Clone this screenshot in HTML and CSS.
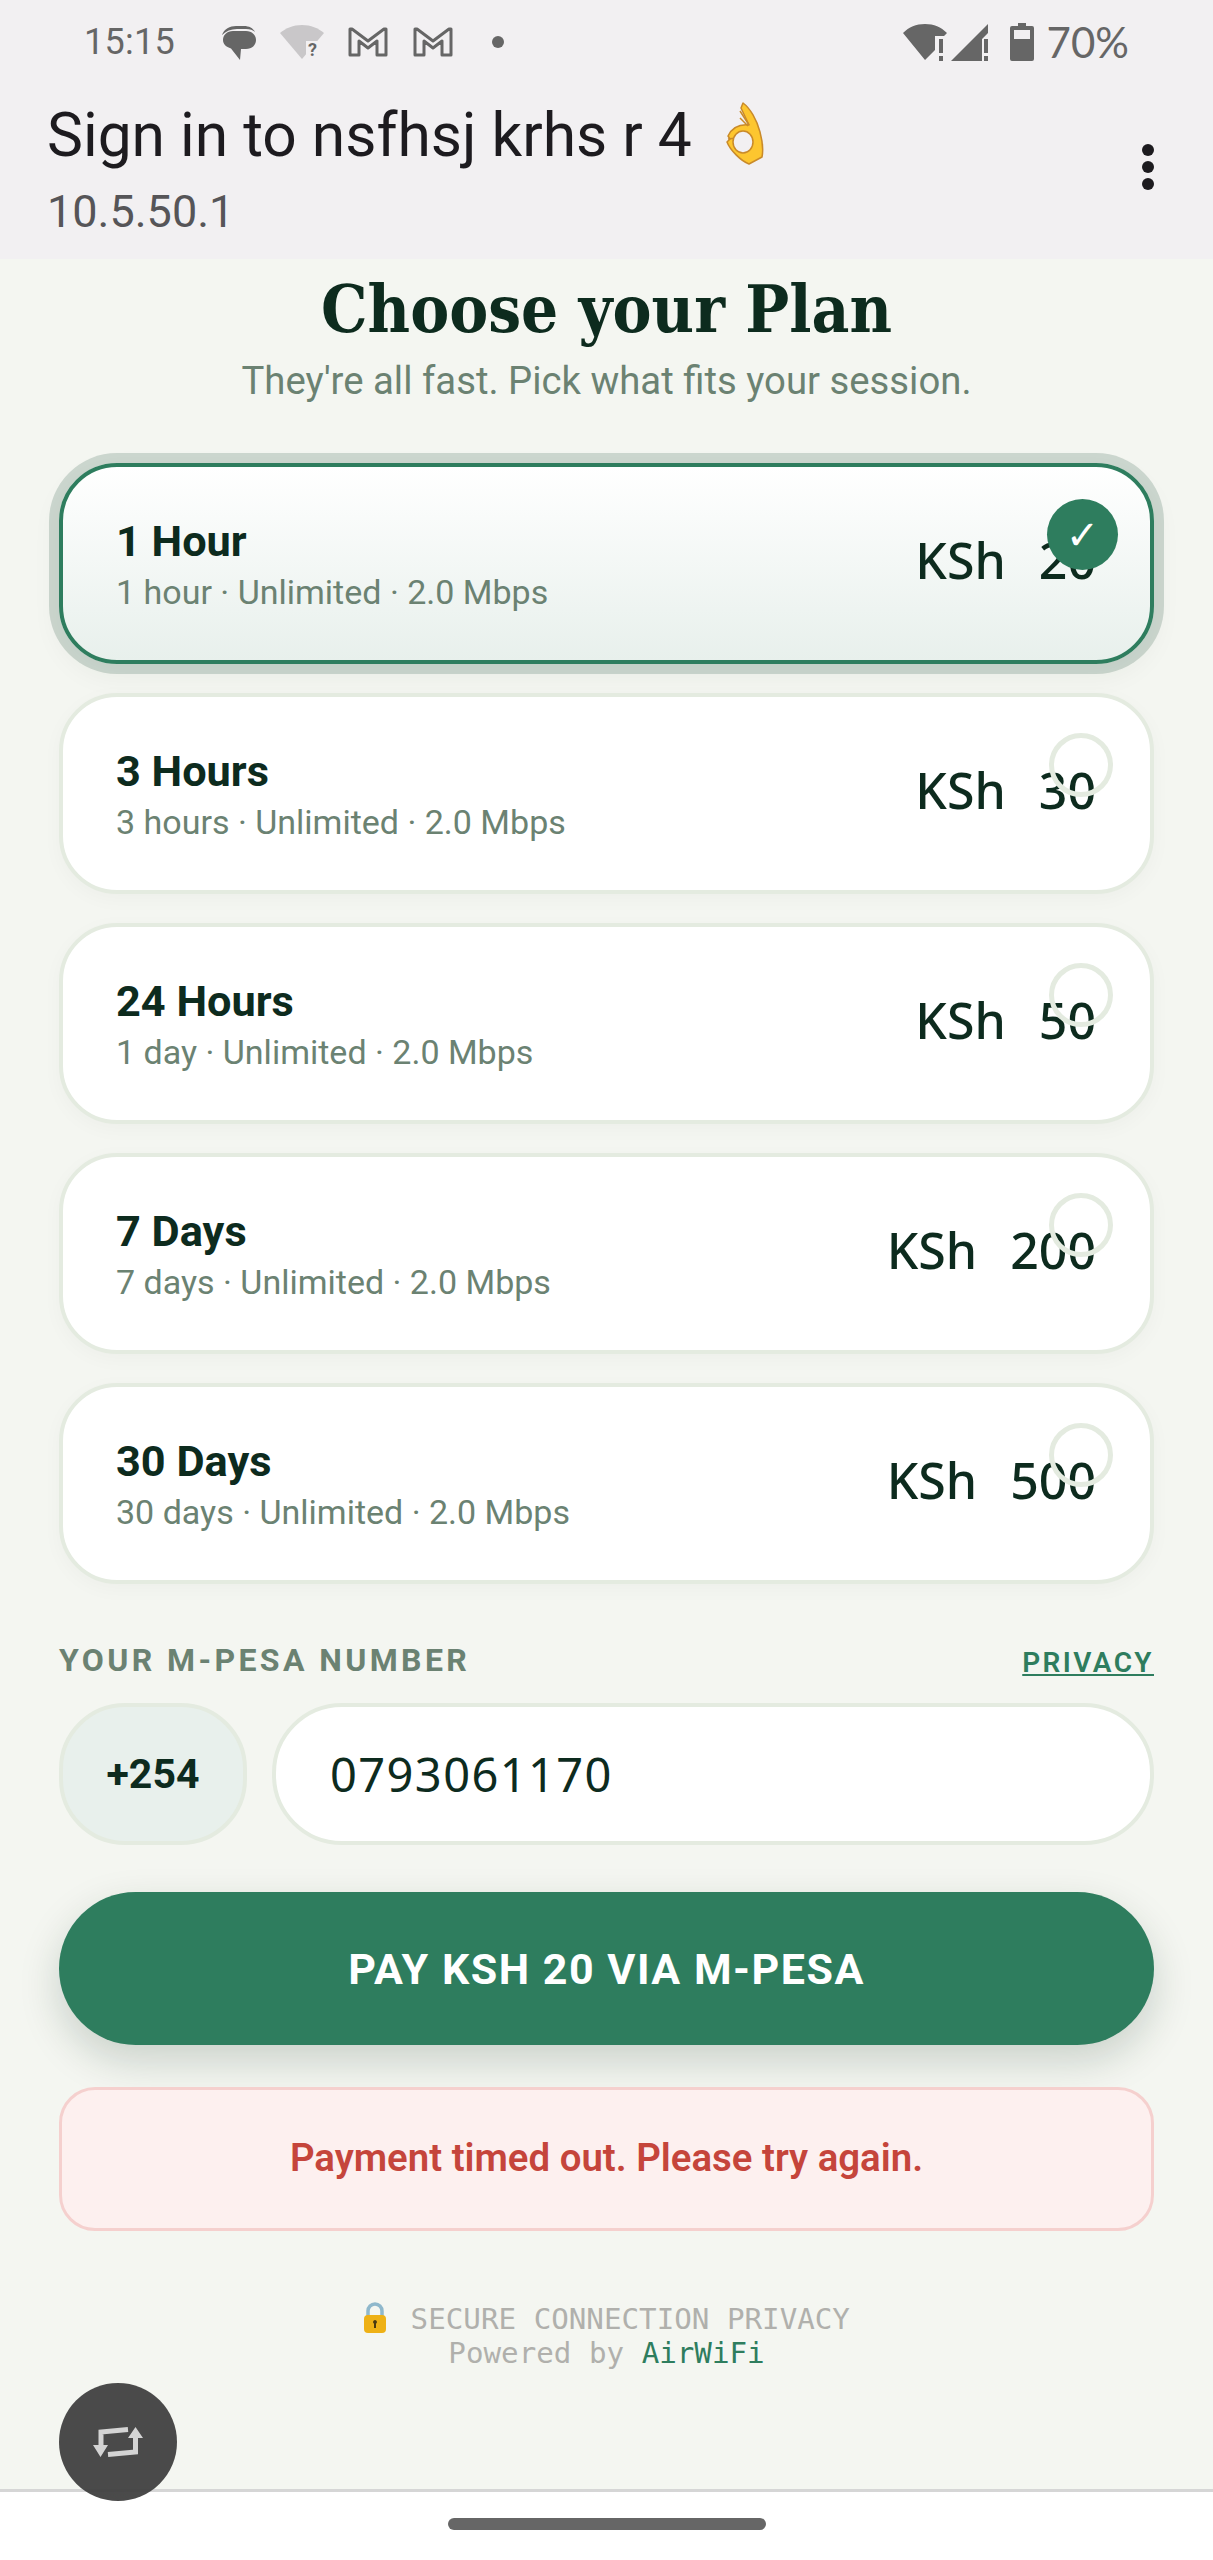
FILE: index.html
```html
<!DOCTYPE html>
<html lang="en">
<head>
<meta charset="UTF-8">
<meta name="viewport" content="width=device-width, initial-scale=1.0">
<title>Choose your Plan</title>
<link rel="stylesheet" href="styles.css">
</head>
<body>

<div class="phone">

<header class="top">
  <div class="statusbar">
    <span class="clock">15:15</span>
    <div class="notif-icons">
      <svg class="ic-msg" viewBox="0 0 36 36"><path d="M1 10C3 4 9 1 15 1h8c5 0 9 2 11 6-2-2-5-3-9-3h-9C10 4 5 6 1 10z" fill="#666"/><path d="M12 6h13c6 0 10 4 10 9s-4 9-10 9h-5l-1 11-9-11.500C5 22 2 19 2 15c0-5 4-9 10-9z" fill="#666"/></svg>
      <svg class="ic-wifi" viewBox="0 0 44 36"><path d="M0 9C6 4 13 1 22 1s16 3 22 8L22 35z" fill="#c9c7c9"/><path d="M26 17h18v19H26z" fill="#f2f0f2"/><text x="28" y="32" class="ic-q">?</text></svg>
      <svg class="ic-mail" viewBox="0 0 42 32"><path d="M3 3v26h9V15l9 7 9-7v14h9V3h-2L21 15 5 3z" fill="none" stroke="#666" stroke-width="3" stroke-linejoin="round"/></svg>
      <svg class="ic-mail" viewBox="0 0 42 32"><path d="M3 3v26h9V15l9 7 9-7v14h9V3h-2L21 15 5 3z" fill="none" stroke="#666" stroke-width="3" stroke-linejoin="round"/></svg>
      <span class="notif-dot"></span>
    </div>
    <div class="sys-icons">
      <svg class="ic-wifi-full" viewBox="0 0 44 38"><path d="M0 10C6 4 13 1 22 1s16 3 22 9l-3 3h-9v14l-10 10z" fill="#666"/><path d="M36 16h4v14h-4zM36 33h4v5h-4z" fill="#666"/></svg>
      <svg class="ic-signal" viewBox="0 0 38 38"><path d="M0 38L37 1v9l-6 6v22z" fill="#666"/><path d="M33 16h4v14h-4zM33 33h4v5h-4z" fill="#666"/></svg>
      <svg class="ic-batt" viewBox="0 0 24 38"><path d="M8 0h8v3h6a2 2 0 0 1 2 2v31a2 2 0 0 1-2 2H2a2 2 0 0 1-2-2V5a2 2 0 0 1 2-2h6zM4 7v9h16V7z" fill="#666" fill-rule="evenodd"/></svg>
      <span class="batt-pct">70%</span>
    </div>
  </div>
  <div class="appbar">
    <div>
      <div class="app-title">Sign in to nsfhsj krhs r 4
        <svg class="ok-hand" viewBox="0 0 38 63"><path d="M17 1C24 6 31 18 34 30c3 11 3 20 2 25L23 62C15 59 4 48 1 40l3-3-2-3C6 26 13 22 23 23L15 6z" fill="#fdc62f" stroke="#c98a2a" stroke-width="1.500" stroke-linejoin="round"/><path d="M14 9l9 14M14 16l8 8" fill="none" stroke="#c98a2a" stroke-width="1.500"/><path d="M2 37l8-1" fill="none" stroke="#c98a2a" stroke-width="1.500"/><ellipse cx="17" cy="40" rx="10" ry="11" fill="#f2f0f2" stroke="#c98a2a" stroke-width="1.500"/></svg>
      </div>
      <div class="app-sub">10.5.50.1</div>
    </div>
    <div class="more"><i></i><i></i><i></i></div>
  </div>
</header>

<main class="page">
  <h1>Choose your Plan</h1>
  <p class="tagline">They're all fast. Pick what fits your session.</p>

  <div class="plans">
    <div class="plan selected">
      <div><div class="plan-name">1 Hour</div><div class="plan-info">1 hour · Unlimited · 2.0 Mbps</div></div>
      <div class="plan-price"><span>KSh</span> <span>20</span></div>
      <span class="tick">✓</span>
    </div>
    <div class="plan">
      <div><div class="plan-name">3 Hours</div><div class="plan-info">3 hours · Unlimited · 2.0 Mbps</div></div>
      <div class="plan-price"><span>KSh</span> <span>30</span></div>
      <span class="tick"></span>
    </div>
    <div class="plan">
      <div><div class="plan-name">24 Hours</div><div class="plan-info">1 day · Unlimited · 2.0 Mbps</div></div>
      <div class="plan-price"><span>KSh</span> <span>50</span></div>
      <span class="tick"></span>
    </div>
    <div class="plan">
      <div><div class="plan-name">7 Days</div><div class="plan-info">7 days · Unlimited · 2.0 Mbps</div></div>
      <div class="plan-price"><span>KSh</span> <span>200</span></div>
      <span class="tick"></span>
    </div>
    <div class="plan">
      <div><div class="plan-name">30 Days</div><div class="plan-info">30 days · Unlimited · 2.0 Mbps</div></div>
      <div class="plan-price"><span>KSh</span> <span>500</span></div>
      <span class="tick"></span>
    </div>
  </div>

  <div class="label-row">
    <label for="phone">YOUR M-PESA NUMBER</label>
    <a class="privacy" href="#">PRIVACY</a>
  </div>
  <div class="phone-row">
    <div class="prefix">+254</div>
    <input type="text" id="phone" class="phone-input" value="0793061170">
  </div>

  <button class="pay">PAY KSH 20 VIA M-PESA</button>

  <div class="error">Payment timed out. Please try again.</div>

  <div class="foot">
    <div><svg class="lock" viewBox="0 0 24 32"><path d="M5 15V9a7 7 0 0 1 14 0v6" fill="none" stroke="#8fb8cc" stroke-width="3.500"/><rect x="1" y="13" width="22" height="18" rx="4" fill="#eeb116"/><path d="M12 18a2 2 0 0 1 1 3.700V26h-2v-4.300A2 2 0 0 1 12 18z" fill="#4a3a10"/></svg> SECURE CONNECTION PRIVACY</div>
    <div>Powered by <span class="brand">AirWiFi</span></div>
  </div>
</main>

<div class="navbar"><span class="home-pill"></span></div>

<div class="fab">
  <svg viewBox="0 0 50 30"><path d="M35 2.500L8 5v15M42.500 10v15L15 27.500" fill="none" stroke="#d4d4d4" stroke-width="5"/><path d="M0 18h15L7.500 30zM35 11h15L42.500 0z" fill="#d4d4d4"/></svg>
</div>

</div>

</body>
</html>
```

FILE: styles.css
```css
* {
  box-sizing: border-box;
}
html, body {
  margin: 0;
  padding: 0;
  height: 2560px;
  overflow: hidden;
}
body {
  font-family: Roboto, sans-serif;
  background-color: #f4f6f1;
}
.phone {
  position: relative;
  display: flex;
  flex-direction: column;
  height: 2560px;
}

/* android chrome */
.top {
  height: 259px;
  flex-shrink: 0;
  background-color: #f2f0f2;
}
.statusbar {
  display: flex;
  align-items: center;
  height: 84px;
  padding: 0 84px;
  color: #666;
}
.clock {
  font-size: 36px;
  letter-spacing: 0.3px;
}
.notif-icons {
  display: flex;
  align-items: center;
  gap: 23px;
  margin-left: 46px;
}
.ic-msg {
  width: 36px;
  height: 36px;
  margin-top: 2px;
}
.ic-wifi {
  width: 44px;
  height: 36px;
}
.ic-q {
  font-family: Roboto, sans-serif;
  font-size: 18px;
  font-weight: 700;
  fill: #666;
}
.ic-mail {
  width: 42px;
  height: 32px;
}
.notif-dot {
  width: 12px;
  height: 12px;
  margin-left: 15px;
  border-radius: 50%;
  background-color: #666;
}
.sys-icons {
  display: flex;
  align-items: center;
  margin-left: auto;
}
.ic-wifi-full {
  width: 44px;
  height: 38px;
}
.ic-signal {
  width: 38px;
  height: 38px;
  margin-left: 4px;
}
.ic-batt {
  width: 24px;
  height: 38px;
  margin-left: 21px;
}
.batt-pct {
  font-size: 42px;
  margin-left: 13px;
  font-family: Lato, sans-serif;
}
.appbar {
  display: flex;
  justify-content: space-between;
  align-items: center;
  padding: 14px 59px 0 47px;
}
.app-title {
  display: flex;
  align-items: center;
  gap: 34px;
  font-size: 60.5px;
  line-height: 76px;
  color: #1d1b1f;
}
.ok-hand {
  width: 38px;
  height: 63px;
  margin-top: -6px;
}
.app-sub {
  font-size: 45px;
  line-height: 60px;
  color: #565558;
  margin-top: 8px;
}
.more {
  display: flex;
  flex-direction: column;
  gap: 5px;
  margin-top: -6px;
}
.more i {
  width: 12px;
  height: 12px;
  border-radius: 50%;
  background-color: #1d1b1f;
}

/* page */
.page {
  flex: 1;
  padding: 0 59px;
}
h1 {
  margin: 11px 0 0;
  text-align: center;
  font-family: "DejaVu Serif Condensed", "DejaVu Serif", serif;
  font-stretch: condensed;
  font-size: 65px;
  font-weight: 700;
  line-height: 78px;
  color: #0d2b1e;
}
.tagline {
  margin: 8px 0 0;
  text-align: center;
  font-size: 38.3px;
  line-height: 50px;
  color: #6b8272;
}
.plans {
  display: flex;
  flex-direction: column;
  gap: 29px;
  margin-top: 57px;
}
.plan {
  position: relative;
  display: flex;
  justify-content: space-between;
  align-items: center;
  height: 201px;
  padding: 0 54px 0 53px;
  background-color: #fff;
  border: 4px solid #e4ebe0;
  border-radius: 58px;
  box-shadow: 0 5px 20px rgba(13, 43, 30, 0.03);
}
.plan.selected {
  border-color: #2e7d5e;
  background: linear-gradient(180deg, #fff 0%, #e8f0ec 100%);
  box-shadow: 0 0 0 10px rgba(46, 90, 70, 0.2), 0 10px 30px rgba(13, 43, 30, 0.06);
}
.plan-name {
  margin-top: 2px;
  font-size: 43.3px;
  font-weight: 700;
  line-height: 52px;
  color: #0d2b1e;
}
.plan-info {
  font-size: 34px;
  line-height: 44px;
  margin-top: 2px;
  color: #6b8272;
}
.plan-price {
  display: flex;
  gap: 33px;
  margin-top: -8px;
  font-family: "Noto Sans", sans-serif;
  font-size: 50px;
  font-weight: 500;
  color: #0d2b1e;
}
.tick {
  position: absolute;
  top: 36px;
  right: 37px;
  width: 64px;
  height: 64px;
  border: 5px solid #e4ebe0;
  border-radius: 50%;
}
.plan.selected .tick {
  top: 32px;
  right: 32px;
  width: 71px;
  height: 71px;
  display: flex;
  align-items: center;
  justify-content: center;
  border: none;
  background-color: #2e7d5e;
  color: #fff;
  font-family: "DejaVu Sans", sans-serif;
  font-size: 40px;
}

.label-row {
  display: flex;
  justify-content: space-between;
  align-items: flex-end;
  margin-top: 57px;
}
.label-row label {
  font-size: 32px;
  font-weight: 700;
  letter-spacing: 3.4px;
  color: #6b8272;
}
.privacy {
  font-size: 28px;
  font-weight: 600;
  letter-spacing: 2.4px;
  color: #2e7d5e;
}
.phone-row {
  display: flex;
  gap: 25px;
  margin-top: 24px;
}
.prefix {
  display: flex;
  align-items: center;
  justify-content: center;
  width: 188px;
  height: 142px;
  background-color: #e8f0ec;
  border: 4px solid #e4ebe0;
  border-radius: 66px;
  font-size: 41px;
  font-weight: 700;
  color: #0d2b1e;
}
.phone-input {
  flex: 1;
  min-width: 0;
  height: 142px;
  padding: 0 54px;
  background-color: #fff;
  border: 4px solid #e4ebe0;
  border-radius: 70px;
  outline: none;
  font-family: "Noto Sans", sans-serif;
  font-size: 47px;
  letter-spacing: 1.4px;
  color: #0d2b1e;
}
.pay {
  display: block;
  width: 100%;
  height: 153px;
  margin-top: 47px;
  background-color: #2e7d5e;
  border: none;
  border-radius: 77px;
  box-shadow: 0 16px 40px rgba(13, 43, 30, 0.18);
  font-family: Roboto, sans-serif;
  font-size: 43px;
  font-weight: 700;
  letter-spacing: 1.5px;
  color: #fff;
}
.error {
  display: flex;
  align-items: center;
  justify-content: center;
  height: 144px;
  margin-top: 42px;
  padding-bottom: 4px;
  background-color: #fdf0ef;
  border: 3px solid #f5d0ce;
  border-radius: 36px;
  font-size: 38.4px;
  font-weight: 600;
  color: #c5453b;
}
.foot {
  margin-top: 71px;
  text-align: center;
  font-family: "DejaVu Sans Mono", monospace;
  font-size: 29.2px;
  line-height: 34px;
  color: #b0b0ac;
}
.lock {
  width: 24px;
  height: 32px;
  margin-right: 6px;
  vertical-align: -5px;
}
.brand {
  color: #2e7d5e;
}

.navbar {
  display: flex;
  justify-content: center;
  align-items: flex-start;
  flex-shrink: 0;
  height: 71px;
  padding-top: 26px;
  background-color: #fff;
  border-top: 3px solid #d6d6d6;
}
.home-pill {
  width: 318px;
  height: 12px;
  border-radius: 6px;
  background-color: #666;
}
.fab {
  position: absolute;
  left: 59px;
  top: 2383px;
  display: flex;
  align-items: center;
  justify-content: center;
  width: 118px;
  height: 118px;
  border-radius: 50%;
  background-color: rgba(64, 64, 64, 0.95);
}
.fab svg {
  width: 50px;
  height: 30px;
}
```
